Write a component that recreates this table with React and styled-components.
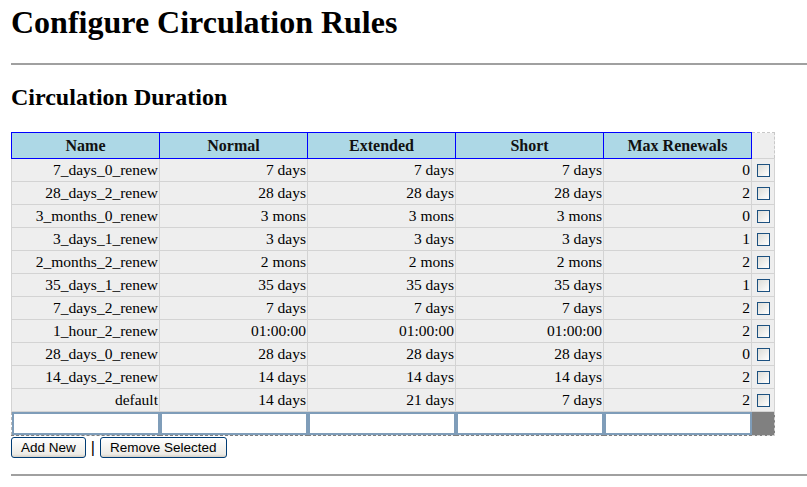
import React from 'react';
import styled, { createGlobalStyle } from 'styled-components';

const GlobalStyle = createGlobalStyle`
    body {
        margin: 0;
        padding: 0 0 0 11px;
        background: #fff;
        font-family: "Liberation Serif", "Times New Roman", serif;
        color: #000;
    }
`;

const Page = styled.div`
    display: flex;
    flex-direction: column;
`;

const Title = styled.h1`
    font-size: 32px;
    font-weight: bold;
    margin: 0;
    padding-top: 4px;
    line-height: 37px;
`;

const Rule = styled.hr`
    margin: ${props => props.top}px 0 0 0;
    border: none;
    border-top: 2px solid #a0a0a0;
    height: 0;
`;

const Subtitle = styled.h2`
    font-size: 24px;
    font-weight: bold;
    margin: 18px 0 0 0;
    line-height: 28px;
`;

const Grid = styled.table`
    margin-top: 21px;
    border-collapse: collapse;
    table-layout: fixed;
    width: 764px;
    border: 1px dashed #b8b8b8;
    font-size: 15.5px;
`;

const HeadCell = styled.th`
    background: #add8e6;
    border: 1px solid #0000ff;
    height: 25px;
    padding: 0;
    font-size: 16px;
    font-weight: bold;
    text-align: center;
    color: #111;
`;

const BlankHead = styled.th`
    background: #eeeeee;
    border: 1px dashed #c8c8c8;
    border-left: 1px solid #0000ff;
    width: 22px;
    padding: 0;
`;

const Cell = styled.td`
    background: #eeeeee;
    border: 1px solid #d3d3d3;
    height: 22px;
    padding: 0 1px 0 0;
    text-align: right;
    white-space: nowrap;
    overflow: hidden;
`;

const CheckCell = styled(Cell)`
    text-align: center;
    padding: 0;
`;

const Check = styled.span`
    display: inline-block;
    width: 11px;
    height: 11px;
    border: 1px solid #1c5180;
    background: linear-gradient(135deg, #dcdcd7 0%, #ffffff 100%);
    vertical-align: middle;
    margin-top: -2px;
`;

const InputCell = styled.td`
    padding: 0;
    height: 23px;
    background: #eeeeee;
    border-bottom: 1px dashed #808080;
`;

const GrayCell = styled.td`
    background: #808080;
    border-bottom: 1px dashed #d0d0d0;
    border-right: 1px dashed #d0d0d0;
    padding: 0;
`;

const Field = styled.input`
    box-sizing: border-box;
    display: block;
    width: 100%;
    height: 23px;
    margin: 0;
    border: 2px solid #7f9db9;
    background: #fff;
`;

const Actions = styled.div`
    display: flex;
    align-items: center;
    gap: 4px;
    margin-top: 1px;
`;

const Button = styled.button`
    font-family: "Liberation Sans", Arial, sans-serif;
    font-size: 13.5px;
    height: 21px;
    padding: 0 9px;
    border: 1px solid #003c74;
    border-radius: 3px;
    background: linear-gradient(#ffffff, #ecebe6 85%, #d6d0c5);
    color: #000;
    line-height: 17px;
`;

const Pipe = styled.span`
    font-family: "Liberation Sans", Arial, sans-serif;
    font-size: 16px;
    color: #000;
    margin: 0 1px;
`;

const rules = [
    ['7_days_0_renew', '7 days', '7 days', '7 days', '0'],
    ['28_days_2_renew', '28 days', '28 days', '28 days', '2'],
    ['3_months_0_renew', '3 mons', '3 mons', '3 mons', '0'],
    ['3_days_1_renew', '3 days', '3 days', '3 days', '1'],
    ['2_months_2_renew', '2 mons', '2 mons', '2 mons', '2'],
    ['35_days_1_renew', '35 days', '35 days', '35 days', '1'],
    ['7_days_2_renew', '7 days', '7 days', '7 days', '2'],
    ['1_hour_2_renew', '01:00:00', '01:00:00', '01:00:00', '2'],
    ['28_days_0_renew', '28 days', '28 days', '28 days', '0'],
    ['14_days_2_renew', '14 days', '14 days', '14 days', '2'],
    ['default', '14 days', '21 days', '7 days', '2'],
];

const headers = ['Name', 'Normal', 'Extended', 'Short', 'Max Renewals'];

const App = () => {
    return (
        <Page>
            <GlobalStyle />
            <Title>Configure Circulation Rules</Title>
            <Rule top={22} />
            <Subtitle>Circulation Duration</Subtitle>
            <Grid>
                <colgroup>
                    {headers.map(h => <col key={h} style={{width: 148}} />)}
                    <col style={{width: 23}} />
                </colgroup>
                <thead>
                    <tr>
                        {headers.map(h => <HeadCell key={h}>{h}</HeadCell>)}
                        <BlankHead />
                    </tr>
                </thead>
                <tbody>
                    {rules.map(r => (
                        <tr key={r[0]}>
                            {r.map((v, i) => <Cell key={i}>{v}</Cell>)}
                            <CheckCell><Check /></CheckCell>
                        </tr>
                    ))}
                    <tr>
                        {headers.map(h => (
                            <InputCell key={h}><Field type='text' /></InputCell>
                        ))}
                        <GrayCell />
                    </tr>
                </tbody>
            </Grid>
            <Actions>
                <Button>Add New</Button>
                <Pipe>|</Pipe>
                <Button>Remove Selected</Button>
            </Actions>
            <Rule top={16} />
        </Page>
    );
};

export default App;
